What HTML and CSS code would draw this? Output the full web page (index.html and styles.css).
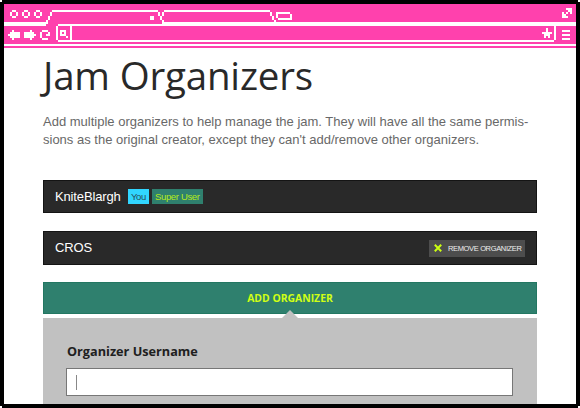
FILE: index.html
```html
<!DOCTYPE html>
<html lang="en">
<head>
<meta charset="utf-8">
<title>Jam Organizers</title>
<link rel="stylesheet" href="styles.css">
</head>
<body>
<div class="window">
<svg class="chrome" width="572" height="44" viewBox="4 4 572 44" shape-rendering="crispEdges" aria-hidden="true">
<g fill="#fff">
<!-- tab strip -->
<path d="M4 22H46V20H48V16H50V12H52V10H158V12H160V16H162V12H164V10H270V12H272V16H274V20H276V22H576V26H58V24H46V26H4Z"/>
<path fill="#ff41ad" d="M48 24V20H50V16H52V12H158V16H160V20H162V24ZM164 22V20H162V16H164V12H270V16H272V20H274V22Z"/>
<path d="M150 16h4v4h-4z"/>
<path fill-rule="evenodd" d="M276 12H290V14H292V20H278V18H276ZM278 14V18H290V14Z"/>
<!-- window buttons -->
<path id="dot" d="M12 10h4v2h-4zM12 16h4v2h-4zM10 12h2v4h-2zM16 12h2v4h-2z"/>
<use href="#dot" x="12"/><use href="#dot" x="24"/>
<!-- navigation -->
<path d="M8 34h2v-2h2v-2h2v2h6v6h-6v2h-2v-2h-2v-2h-2z"/>
<path d="M36 34h-2v-2h-2v-2h-2v2h-6v6h6v2h2v-2h2v-2h2z"/>
<path d="M42 30h6v2h-6zM46 34h4v2h-4zM48 32h2v2h-2zM40 32h2v6h-2zM42 38h6v2h-6z"/>
<!-- address bar -->
<path d="M58 24H556V26H58ZM56 26h2v14h-2zM70 26h2v14h-2zM554 26h2v14h-2zM58 40H554V42H58Z"/>
<path d="M60 30h6v2h-6zM60 34h6v2h-6zM60 32h2v2h-2zM64 32h2v2h-2zM66 36h2v2h-2z"/>
<path d="M546 28h2v4h4v2h-2v4h-2v-2h-2v2h-2v-4h-2v-2h4z"/>
<path d="M562 30h8v2h-8zM562 34h8v2h-8zM562 38h8v2h-8z"/>
<path d="M566 8h6v2h-6zM568 10h4v2h-4zM562 12h2v2h-2zM566 12h2v2h-2zM570 12h2v2h-2zM562 14h4v2h-4zM562 16h6v2h-6z"/>
<path d="M4 44H576V46H4Z"/>
</g>
</svg>
<main class="page">
<h1 class="title">Jam Organizers</h1>
<p class="intro">Add multiple organizers to help manage the jam. They will have all the same permis-<br>sions as the original creator, except they can't add/remove other organizers.</p>
<section class="row first">
<span class="name">KniteBlargh</span><span class="tag you">You</span><span class="tag super">Super User</span>
</section>
<section class="row">
<span class="name">CROS</span>
<button class="remove"><svg class="cross" width="8" height="8" viewBox="0 0 8 8"><path d="M.8 .8L7.2 7.2M7.2 .8L.8 7.2" stroke="#cf1" stroke-width="2"/></svg><span>REMOVE ORGANIZER</span></button>
</section>
<div class="add">ADD ORGANIZER</div>
<section class="form">
<label class="label">Organizer Username</label>
<div class="field"><span class="caret"></span></div>
</section>
</main>
</div>
</body>
</html>
```
FILE: styles.css
```css
* { box-sizing: border-box; }
body { margin: 0; background: #fff; }
.window {
  width: 580px; height: 408px; overflow: hidden;
  border: 4px solid #000; background: #fff;
  clip-path: polygon(2px 0, 578px 0, 578px 2px, 580px 2px, 580px 406px, 578px 406px, 578px 408px, 2px 408px, 2px 406px, 0 406px, 0 2px, 2px 2px);
}
.chrome { display: block; background: #ff41ad; }
.page { padding: 3px 39px 0; font-family: "Liberation Sans", Arial, sans-serif; }
.title {
  margin: 0; height: 62px; white-space: nowrap;
  font: 400 38.5px/48px "Open Sans", sans-serif; letter-spacing: -.18px; color: #292929;
}
.intro { margin: 0 0 31px; font-size: 13px; line-height: 18px; height: 36px; color: #686868; white-space: nowrap; }
.row {
  display: flex; align-items: center; width: 494px; height: 34px;
  margin-bottom: 17px; padding: 0 11px; background: #292929; border: 1px solid #141414; color: #fff;
}
.first { height: 33px; margin-bottom: 18px; }
.name { width: 73px; font-size: 13px; letter-spacing: -.15px; }
.row:not(.first) .name { margin-top: -1px; }
.tag { height: 15px; line-height: 15px; padding: 0 3px; font-size: 9.5px; letter-spacing: -.35px; margin-right: 3px; white-space: nowrap; }
.you { background: #31d6ff; color: #244f5c; width: 21px; }
.super { background: #2f806e; color: #b5ea1c; width: 51px; }
.remove {
  display: flex; align-items: center; gap: 6px; margin-left: auto;
  width: 96px; height: 17px; padding: 0 0 0 5px; border: 0; background: #4d4d4d;
  font: 7.5px/17px "Liberation Sans", sans-serif; letter-spacing: -.35px; color: #eee; white-space: nowrap;
}
.cross { flex: none; }
.add {
  width: 494px; height: 32px; background: #2f806e; border: 1px solid #237762; color: #d0ff14;
  font: 700 10.4px/30px "Open Sans", sans-serif; text-align: center;
}
.form { position: relative; width: 494px; height: 100px; margin-top: 4px; padding: 24px; background: #c1c1c1; }
.form::before {
  content: ""; position: absolute; top: -8px; left: 239px;
  border: 8px solid transparent; border-top: 0; border-bottom-color: #c1c1c1;
}
.label { display: block; height: 26px; font: 700 12.7px/18px "Open Sans", sans-serif; color: #202020; }
.field { display: flex; align-items: center; width: 447px; height: 28px; margin-left: -1px; padding-left: 9px; border: 1px solid #777; background: #fff; }
.caret { width: 1px; height: 15px; background: #888; }
```
